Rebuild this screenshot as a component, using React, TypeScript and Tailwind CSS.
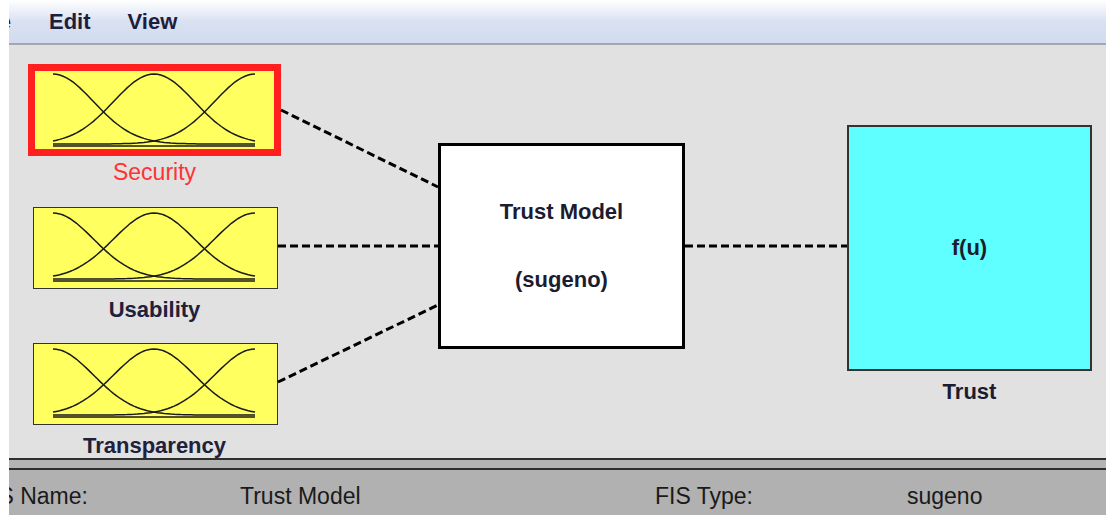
import React from "react";

const font = { fontFamily: '"Liberation Sans", Arial, sans-serif' };

// gaussian membership function as an svg path
function gauss(x0: number, x1: number, c: number, sigma: number, top: number, base: number) {
  const pts: string[] = [];
  for (let i = 0; i <= 60; i++) {
    const x = x0 + ((x1 - x0) * i) / 60;
    const v = Math.exp(-((x - c) * (x - c)) / (2 * sigma * sigma));
    const y = base - v * (base - top);
    pts.push(`${i === 0 ? "M" : "L"}${x.toFixed(1)},${y.toFixed(1)}`);
  }
  return pts.join(" ");
}

function Curves({ w, h, x0, x1, top, base }: { w: number; h: number; x0: number; x1: number; top: number; base: number }) {
  const mid = (x0 + x1) / 2;
  const sigma = (x1 - x0) / 5;
  return (
    <svg width={w} height={h} className="block">
      <g fill="none" stroke="#1a1a1a" strokeWidth={1.5}>
        <path d={gauss(x0, x1, x0, sigma, top, base - 1)} />
        <path d={gauss(x0, x1, mid, sigma, top, base - 1)} />
        <path d={gauss(x0, x1, x1, sigma, top, base - 1)} />
        <line x1={x0} y1={base + 1} x2={x1} y2={base + 1} />
      </g>
    </svg>
  );
}

function InputBox() {
  return (
    <div className="w-[245px] h-[82px] border border-[#333] bg-[#ffff60]">
      <Curves w={243} h={80} x0={19} x1={221} top={5} base={72} />
    </div>
  );
}

export default function App() {
  return (
    <div className="flex w-[1106px] h-[515px] bg-white overflow-hidden" style={font}>
      <div className="w-[9px] shrink-0 bg-white" />
      <div className="flex flex-col w-[1097px]">
        {/* menu bar */}
        <div className="h-[45px] flex items-center bg-linear-to-b from-white via-[#d9e1f2] to-[#d2dbee] border-b-2 border-[#a3a7b3] text-[22px] font-bold text-[#1e1e3c] overflow-hidden">
          <span className="-ml-[36px] w-[40px] shrink-0">File</span>
          <span className="ml-[36px]">Edit</span>
          <span className="ml-[37px]">View</span>
        </div>

        {/* diagram canvas */}
        <div className="relative h-[413px] bg-[#e1e1e1] flex items-start pl-[19px] overflow-hidden">
          <svg className="absolute inset-0 pointer-events-none" width={1097} height={413}>
            <g stroke="#000" strokeWidth={3} strokeDasharray="8 4" fill="none">
              <line x1={272} y1={65} x2={429} y2={142} />
              <line x1={269} y1={201} x2={429} y2={201} />
              <line x1={269} y1={337} x2={429} y2={260} />
              <line x1={676} y1={201} x2={838} y2={201} />
            </g>
          </svg>

          <div className="w-[253px] pt-[19px] flex flex-col items-start text-[22px] leading-[24px] font-bold text-[#20203a]">
            <div className="w-[253px] h-[92px] border-[7px] border-[#ff1f1f] bg-[#ffff60]">
              <Curves w={239} h={78} x0={18} x1={220} top={3} base={74} />
            </div>
            <div className="mt-[4px] w-full text-center text-[23px] font-normal text-[#ff3333]">Security</div>
            <div className="mt-[23px] ml-[5px]">
              <InputBox />
            </div>
            <div className="mt-[9px] w-full text-center">Usability</div>
            <div className="mt-[21px] ml-[5px]">
              <InputBox />
            </div>
            <div className="mt-[9px] w-full text-center">Transparency</div>
          </div>

          <div className="relative ml-[157px] mt-[98px] w-[247px] h-[206px] border-[3px] border-black bg-white flex flex-col items-center justify-center gap-[42px] text-[22px] leading-[26px] font-bold text-[#1c1c30]">
            <span>Trust Model</span>
            <span>(sugeno)</span>
          </div>

          <div className="relative ml-[162px] mt-[80px] w-[245px] flex flex-col items-center text-[22px] leading-[24px] font-bold text-[#1c1c30]">
            <div className="w-[245px] h-[246px] border-2 border-[#333] bg-[#5fffff] flex items-center justify-center">
              <span>f(u)</span>
            </div>
            <div className="mt-[9px]">Trust</div>
          </div>
        </div>

        {/* status area */}
        <div className="border-t-2 border-[#2e2e2e] h-[10px] bg-[#b4b4b4]" />
        <div className="border-t-2 border-[#2e2e2e] flex-1 bg-[#b1b1b1] flex items-center overflow-hidden text-[23px] text-[#1a1a1a] pt-[8px]">
          <span className="-ml-[31px] w-[262px] shrink-0">FIS Name:</span>
          <span className="w-[415px] shrink-0">Trust Model</span>
          <span className="w-[252px] shrink-0">FIS Type:</span>
          <span>sugeno</span>
        </div>
      </div>
    </div>
  );
}
